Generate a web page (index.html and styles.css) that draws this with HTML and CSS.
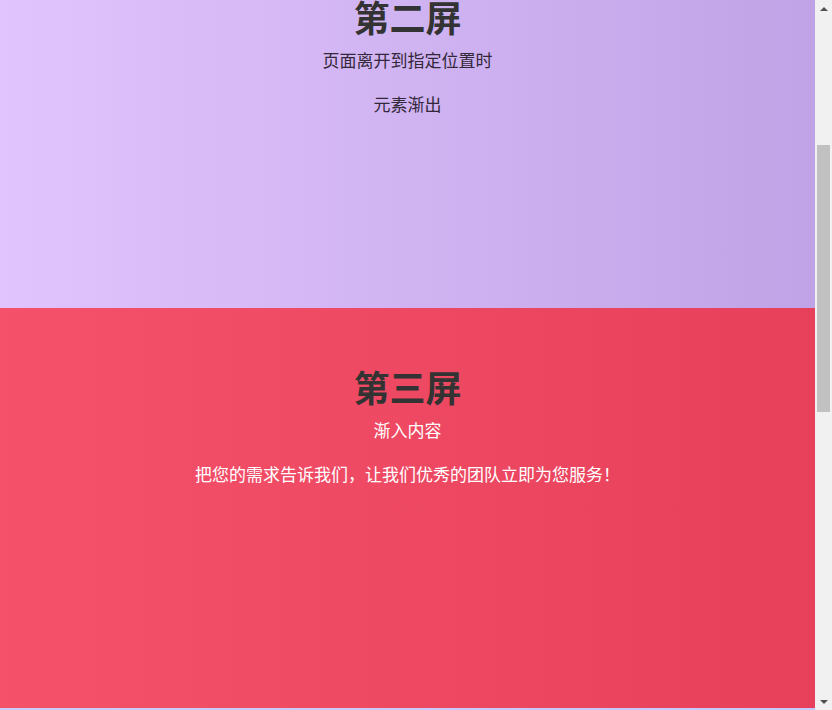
FILE: index.html
```html
<!DOCTYPE html>
<html lang="zh-CN">
<head>
<meta charset="utf-8">
<title>滚动渐变</title>
<link rel="stylesheet" href="styles.css">
</head>
<body>
<div class="page">
  <div class="content">
    <div class="track-inner">
      <section class="screen screen-two">
        <h2 class="title">第二屏</h2>
        <p class="sub">页面离开到指定位置时</p>
        <p class="text">元素渐出</p>
      </section>
      <section class="screen screen-three">
        <h2 class="title">第三屏</h2>
        <p class="sub">渐入内容</p>
        <p class="text">把您的需求告诉我们，让我们优秀的团队立即为您服务！</p>
      </section>
      <section class="screen screen-four"></section>
    </div>
  </div>
  <div class="scrollbar">
    <div class="arrow-btn"><span class="arrow up"></span></div>
    <div class="bar-track"><div class="thumb"></div></div>
    <div class="arrow-btn"><span class="arrow down"></span></div>
  </div>
</div>
</body>
</html>
```

FILE: styles.css
```css
html, body {
  margin: 0;
  padding: 0;
}
body {
  font-family: "Noto Sans CJK SC", "Microsoft YaHei", sans-serif;
  font-size: 17px;
  color: #333;
}
.page {
  display: flex;
  height: 710px;
  overflow: hidden;
}
.content {
  flex: 1;
  overflow: hidden;
}
.track-inner {
  margin-top: -62px;
}
.screen {
  box-sizing: border-box;
  text-align: center;
  padding-top: 56px;
}
.title {
  margin: 0;
  font-size: 36px;
  line-height: 44px;
  font-weight: 700;
  color: #333;
}
.sub {
  margin: 9px 0 0;
  line-height: 26px;
}
.text {
  margin: 18px 0 0;
  line-height: 26px;
}
.screen-two {
  height: 370px;
  background: linear-gradient(to right, #e1c4fd, #bfa3e6);
  color: #33283a;
}
.screen-three {
  height: 400px;
  background: linear-gradient(to right, #f6516b, #e6405a);
  color: #fff;
}
.screen-four {
  height: 400px;
  background: linear-gradient(to right, #c9cdfd, #c6c9fb);
}
.scrollbar {
  width: 17px;
  background: #f1f1f1;
  display: flex;
  flex-direction: column;
}
.arrow-btn {
  height: 17px;
  display: flex;
  align-items: center;
  justify-content: center;
}
.arrow {
  width: 0;
  height: 0;
  border-left: 4px solid transparent;
  border-right: 4px solid transparent;
}
.arrow.up {
  border-bottom: 4px solid #505050;
}
.arrow.down {
  border-top: 4px solid #505050;
}
.bar-track {
  flex: 1;
}
.thumb {
  margin: 128px 2px 0;
  height: 267px;
  background: #c1c1c1;
}
```
